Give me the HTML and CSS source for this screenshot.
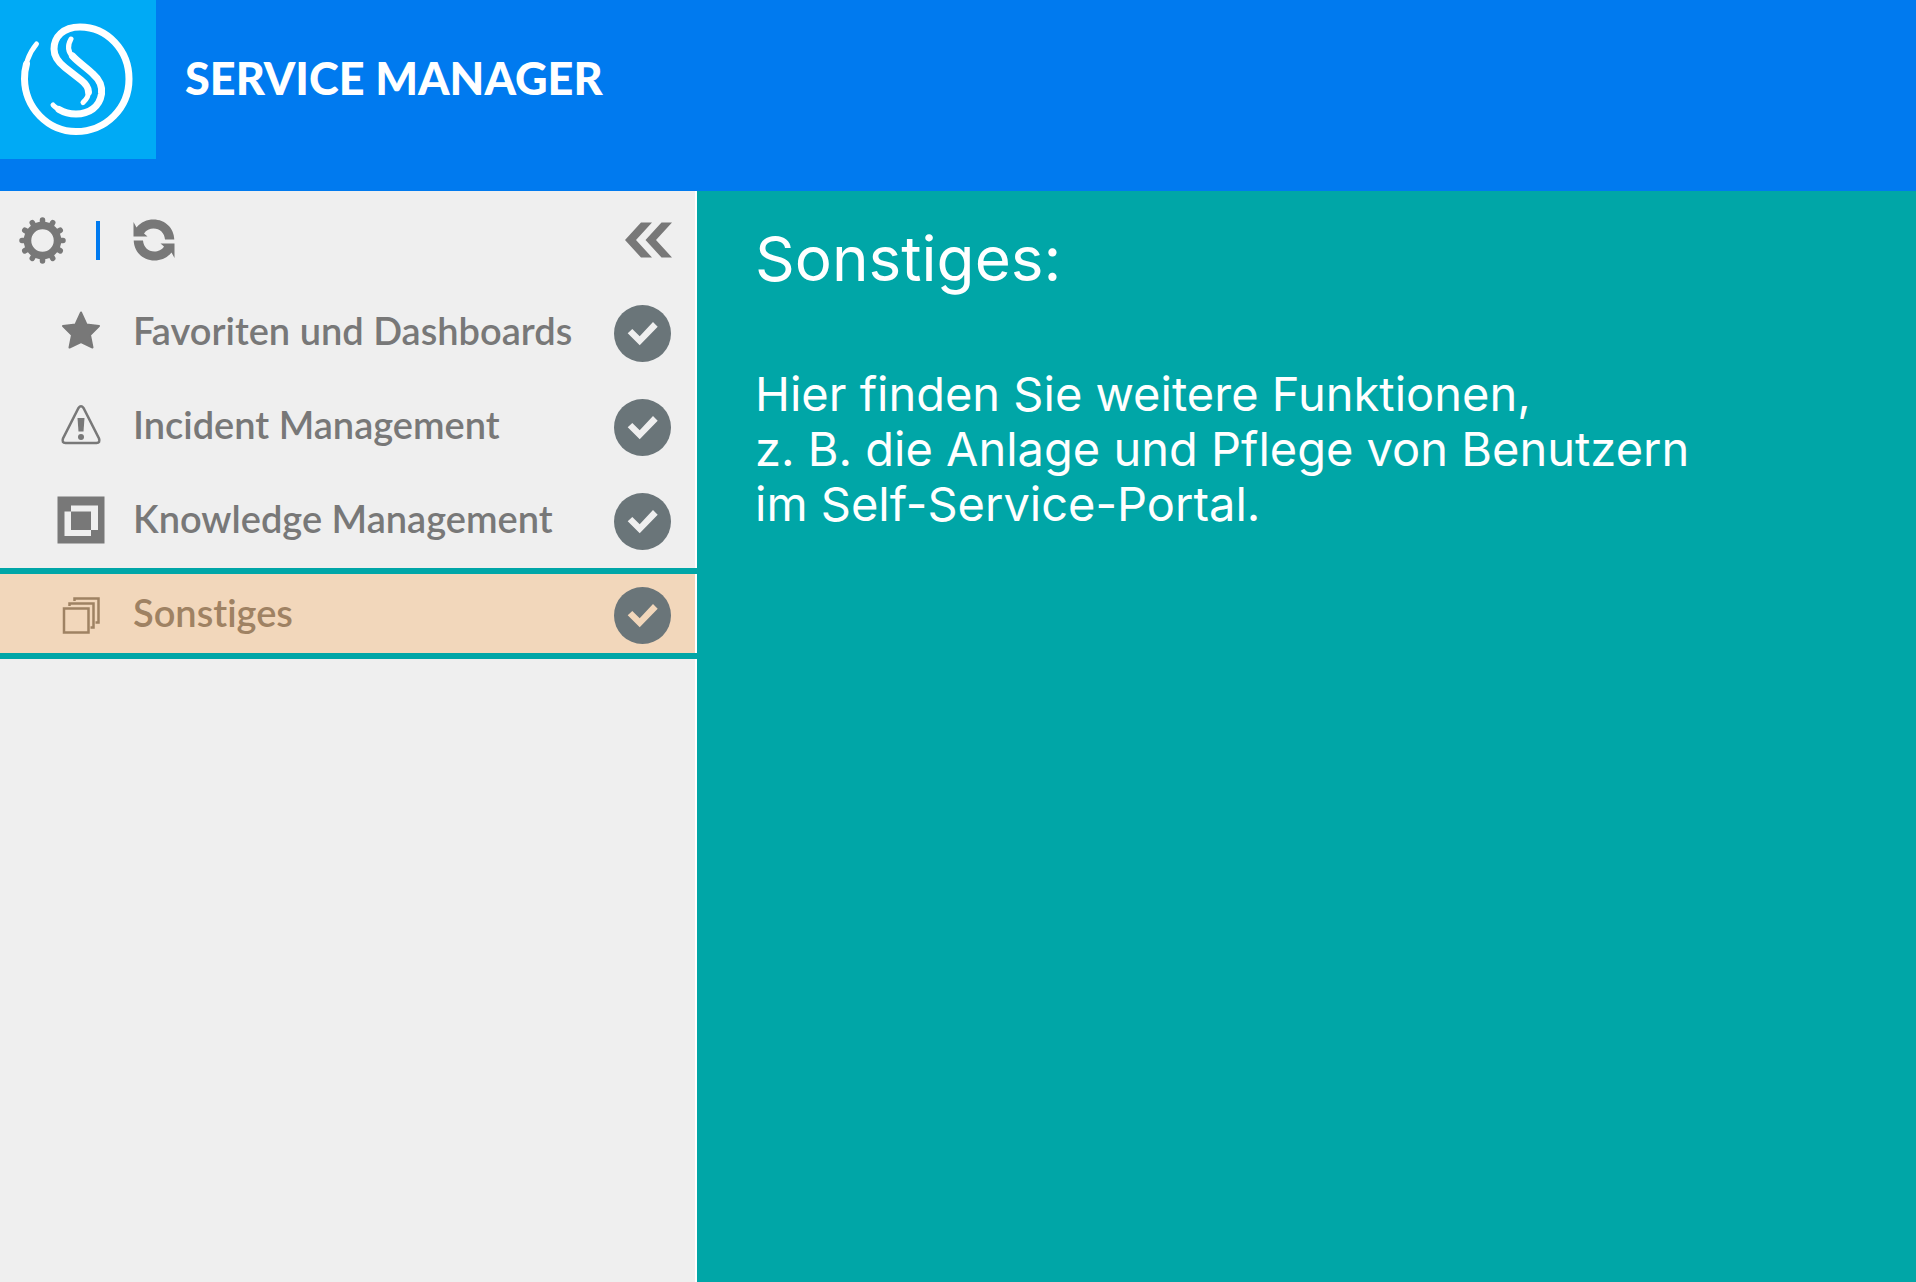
FILE: index.html
```html
<!DOCTYPE html>
<html lang="de">
<head>
<meta charset="utf-8">
<meta name="viewport" content="width=device-width, initial-scale=1">
<title>Service Manager</title>
<link rel="stylesheet" href="styles.css">
</head>
<body>
<svg width="0" height="0" class="symbols" aria-hidden="true">
  <symbol id="check" viewBox="0 0 57 57">
    <circle cx="28.500" cy="28.500" r="28.500" fill="#6a7579"/>
    <path d="M13.700 28.300 18.300 24 25.700 31.200 39 17 43.700 21.700 25.700 40.300z" fill="currentColor"/>
  </symbol>
</svg>

<header class="header">
  <div class="brand">
    <svg class="logo" viewBox="0 0 156 159" aria-hidden="true">
      <g fill="none" stroke="#fff" stroke-linecap="round">
        <path stroke-width="5" d="M36.500 44C29 53 24.500 65 24.500 79"/>
        <path stroke-width="7" d="M26.500 64C25 69 24.500 74 24.500 79C25 108 48 131.500 76 131.500C106 131.500 129 108 129 79C129 50 107 27 80 27C63 27 54 37 54 49C54 57 58 62 65 67.500L81 80C86 84 88.500 88 88.500 92"/>
        <path stroke-width="5" d="M83 102.500C87 99 89 95 88.500 90"/>
        <path stroke-width="5" d="M71 39C67 46 68 52 73 57"/>
        <path stroke-width="7" d="M72.500 56C79 63 87 68 93 74C100 80 102.500 86 101.500 94C99.500 107 89 114 76 114C69 114 64 112.500 59 109.500"/>
        <path stroke-width="5" d="M62 111C58 109 55 107.500 53 105"/>
      </g>
    </svg>
    <h1 class="title">SERVICE MANAGER</h1>
  </div>
</header>

<div class="layout">
  <aside class="sidebar">
    <div class="toolbar">
      <button type="button" class="tool" aria-label="Einstellungen">
        <svg width="47" height="47" viewBox="-23.500 -23.500 47 47" aria-hidden="true">
          <circle r="15" fill="none" stroke="#787878" stroke-width="7.500"/>
          <g stroke="#787878" stroke-width="5.500" stroke-linecap="round">
            <path d="M0-20.500V-17M0 20.500V17M-20.500 0H-17M20.500 0H17"/>
            <path transform="rotate(30)" d="M0-20.500V-17M0 20.500V17M-20.500 0H-17M20.500 0H17"/>
            <path transform="rotate(60)" d="M0-20.500V-17M0 20.500V17M-20.500 0H-17M20.500 0H17"/>
          </g>
        </svg>
      </button>
      <span class="divider"></span>
      <button type="button" class="tool" aria-label="Aktualisieren">
        <svg width="42" height="42" viewBox="0 0 42 42" fill="#787878" aria-hidden="true">
          <path d="M.500 3 3.500 8.500C8 3 14 .500 20.500 .500C32 .500 41 9 41.300 20.500H32C31.500 14 27 9.500 20.500 9.500C17 9.500 13 11 11 14.500L14.500 17.500H.500z"/>
          <path transform="rotate(180 21 21)" d="M.500 3 3.500 8.500C8 3 14 .500 20.500 .500C32 .500 41 9 41.300 20.500H32C31.500 14 27 9.500 20.500 9.500C17 9.500 13 11 11 14.500L14.500 17.500H.500z"/>
        </svg>
      </button>
      <button type="button" class="tool collapse" aria-label="Menü einklappen">
        <svg width="47" height="36" viewBox="0 0 47 36" fill="#787878" aria-hidden="true">
          <path d="M16 .500H27L11 18 27 35.500H16L0 18zM36.500 .500H47L31 18 47 35.500H36.500L20.500 18z"/>
        </svg>
      </button>
    </div>

    <nav class="menu" aria-label="Module">
      <a class="item" href="#favoriten">
        <svg class="icon" viewBox="0 0 48 48" aria-hidden="true">
          <path d="M24 4.500 29.500 16.500 42 18 33 27 35.500 39.500 24 34 12.500 39.500 15 27 6 18 18.500 16.500z" fill="currentColor" stroke="currentColor" stroke-width="2" stroke-linejoin="round"/>
        </svg>
        <span class="label">Favoriten und Dashboards</span>
        <svg class="check"><use href="#check"/></svg>
      </a>
      <a class="item" href="#incident">
        <svg class="icon" viewBox="0 0 48 48" aria-hidden="true">
          <path d="M21.500 6Q24 2.500 26.500 6L42 36.500Q43.500 41 39.500 41H8.500Q4.500 41 6 36.500z" fill="none" stroke="currentColor" stroke-width="2.500"/>
          <path d="M20.500 16H27.500L26.500 29.500H21.500z" fill="currentColor"/>
          <circle cx="24" cy="35" r="3" fill="currentColor"/>
        </svg>
        <span class="label">Incident Management</span>
        <svg class="check"><use href="#check"/></svg>
      </a>
      <a class="item" href="#knowledge">
        <svg class="icon" viewBox="0 0 48 48" aria-hidden="true">
          <path d="M.500 .500H47.500V47.500H.500z" fill="currentColor"/>
          <path d="M14 9.500H41V34H34V40H7.500V15.500H14zM14 15.500V34H34V15.500z" fill="#efefef" fill-rule="evenodd"/>
        </svg>
        <span class="label">Knowledge Management</span>
        <svg class="check"><use href="#check"/></svg>
      </a>
      <a class="item active" href="#sonstiges" aria-current="page">
        <svg class="icon" viewBox="0 0 48 48" fill="none" stroke="currentColor" stroke-width="2.500" aria-hidden="true">
          <path d="M7 18.500H31.500V42.500H7zM12.500 16V13.500H36.500V37.500H33.500M17.500 11V8.500H41.500V32.500H38.500"/>
        </svg>
        <span class="label">Sonstiges</span>
        <svg class="check"><use href="#check"/></svg>
      </a>
    </nav>
  </aside>

  <main class="content">
    <h2 class="heading">Sonstiges:</h2>
    <p class="text">Hier finden Sie weitere Funktionen,<br>z. B. die Anlage und Pflege von Benutzern<br>im Self-Service-Portal.</p>
  </main>
</div>
</body>
</html>
```
FILE: styles.css
```css
* {
  box-sizing: border-box;
}

body {
  display: flex;
  flex-direction: column;
  min-height: 100vh;
  margin: 0;
  font-family: Lato, "Open Sans", sans-serif;
  font-variant-ligatures: none;
}

.symbols {
  position: absolute;
}

.header {
  padding-bottom: 32px;
  background: #007aef;
}

.brand {
  display: flex;
  align-items: center;
  gap: 29px;
}

.logo {
  width: 156px;
  height: 159px;
  background: #00aaf5;
}

.title {
  margin: 0;
  padding-bottom: 3px;
  color: #fff;
  font-size: 45px;
  font-weight: 900;
  line-height: 54px;
}

.layout {
  display: flex;
  flex: 1;
}

.sidebar {
  flex: 0 0 697px;
  background: linear-gradient(#fff, #fff) right / 2px 100% no-repeat #efefef;
}

.toolbar {
  display: flex;
  align-items: center;
  height: 95px;
  padding: 3px 25px 0 19px;
}

.tool {
  display: flex;
  padding: 0;
  border: 0;
  background: none;
}

.divider {
  width: 4px;
  height: 39px;
  margin: 0 33px 0 30px;
  background: #007aef;
}

.collapse {
  margin-left: auto;
}

.menu {
  display: flex;
  flex-direction: column;
  gap: 3px;
}

.item {
  display: flex;
  align-items: center;
  height: 91px;
  padding: 4px 26px 0 57px;
  color: #787878;
  text-decoration: none;
}

.icon {
  width: 48px;
  height: 48px;
  margin: 0 28px 4px 0;
}

.label {
  flex: 1;
  padding-bottom: 8px;
  font-size: 38px;
  font-weight: 600;
  line-height: 46px;
}

.check {
  width: 57px;
  height: 57px;
  color: #efefef;
}

.active {
  border: solid #00a6a7;
  border-width: 6px 0;
  background: linear-gradient(#f2d7bb, #f2d7bb) left / calc(100% - 2px) 100% no-repeat;
  color: #9f8263;
}

.active .check {
  color: #f2d7bb;
}

.content {
  flex: 1;
  padding: 31px 58px 58px;
  background: #00a6a7;
  color: #fff;
  font-family: Inter, "Open Sans", sans-serif;
}

.heading {
  margin: 0 0 70px;
  font-size: 62px;
  font-weight: 400;
  line-height: 74px;
}

.text {
  margin: 0;
  font-size: 47px;
  line-height: 55px;
}
```
